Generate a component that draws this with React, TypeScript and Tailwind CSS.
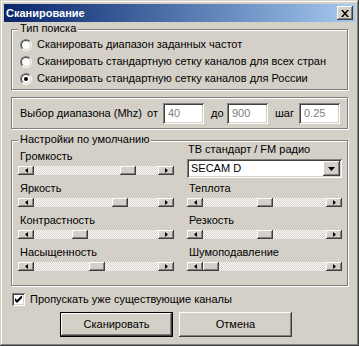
import React from "react";

const raised =
  "shadow-[inset_-1px_-1px_#404040,inset_1px_1px_#ffffff,inset_-2px_-2px_#808080,inset_2px_2px_#d4d0c8]";
const sunken =
  "shadow-[inset_1px_1px_#808080,inset_-1px_-1px_#ffffff,inset_2px_2px_#404040,inset_-2px_-2px_#d4d0c8]";

function Group({ label, className, children }: { label?: string; className: string; children: React.ReactNode }) {
  return (
    <div
      className={
        "relative border border-[#808080] shadow-[1px_1px_0_#ffffff,inset_1px_1px_0_#ffffff] " + className
      }
    >
      {label && (
        <span className="absolute -top-[8px] left-[6px] bg-[#d4d0c8] px-[2px] leading-[13px]">{label}</span>
      )}
      {children}
    </div>
  );
}

function Radio({ checked, label }: { checked?: boolean; label: string }) {
  return (
    <div className="flex h-[17px] items-center">
      <div className="h-[12px] w-[12px] rounded-full border border-t-[#808080] border-l-[#808080] border-b-white border-r-white">
        <div className="flex h-[10px] w-[10px] items-center justify-center rounded-full border border-t-[#404040] border-l-[#404040] border-b-[#d4d0c8] border-r-[#d4d0c8] bg-white">
          {checked && <div className="h-[4px] w-[4px] rounded-full bg-black" />}
        </div>
      </div>
      <span className="ml-[5px] leading-[13px]">{label}</span>
    </div>
  );
}

function Arrow({ dir }: { dir: "left" | "right" }) {
  return (
    <svg width="3" height="5" viewBox="0 0 3 5">
      {dir === "left" ? <path d="M3 0 L0 2.5 L3 5 Z" fill="#000" /> : <path d="M0 0 L3 2.5 L0 5 Z" fill="#000" />}
    </svg>
  );
}

function Scroll({ pos }: { pos: number }) {
  return (
    <div className="flex h-[9px] w-full">
      <div className={"flex w-[16px] items-center justify-center bg-[#d4d0c8] " + raised}>
        <Arrow dir="left" />
      </div>
      <div className="relative flex-1 bg-[repeating-conic-gradient(#ffffff_0_25%,#d4d0c8_0_50%)] bg-[length:2px_2px]">
        <div className={"absolute top-0 h-[9px] w-[16px] bg-[#d4d0c8] " + raised} style={{ left: pos }} />
      </div>
      <div className={"flex w-[16px] items-center justify-center bg-[#d4d0c8] " + raised}>
        <Arrow dir="right" />
      </div>
    </div>
  );
}

function Slider({ label, pos, first }: { label: string; pos: number; first?: boolean }) {
  return (
    <div className={first ? "" : "mt-[7px]"}>
      <div className="pl-[2px] leading-[13px]">{label}</div>
      <div className="mt-[3px]">
        <Scroll pos={pos} />
      </div>
    </div>
  );
}

function Field({ value }: { value: string }) {
  return (
    <div className={"flex h-[21px] w-[41px] items-center bg-white pl-[5px] text-[#808080] " + sunken}>{value}</div>
  );
}

function Button({ label, def }: { label: string; def?: boolean }) {
  return (
    <div className={"h-[25px] w-[113px] " + (def ? "border border-black" : "")}>
      <div className={"flex h-full w-full items-center justify-center bg-[#d4d0c8] " + raised}>{label}</div>
    </div>
  );
}

export default function App() {
  return (
    <div
      className={
        "flex h-[346px] w-[359px] flex-col bg-[#d4d0c8] p-[4px] text-[11px] text-black shadow-[inset_-1px_-1px_#404040,inset_1px_1px_#d4d0c8,inset_-2px_-2px_#808080,inset_2px_2px_#ffffff]"
      }
      style={{ fontFamily: '"Liberation Sans", Arial, sans-serif' }}
    >
      <div className="flex h-[18px] items-center justify-between bg-gradient-to-r from-[#0a246a] to-[#a6caf0] pl-[2px] pr-[2px]">
        <span className="font-bold text-white leading-[13px]">Сканирование</span>
        <div className={"flex h-[14px] w-[16px] items-center justify-center bg-[#d4d0c8] " + raised}>
          <svg width="8" height="7" viewBox="0 0 8 7">
            <path d="M0 0 L2 0 L4 2.5 L6 0 L8 0 L5 3.5 L8 7 L6 7 L4 4.5 L2 7 L0 7 L3 3.5 Z" fill="#000" />
          </svg>
        </div>
      </div>

      <Group label="Тип поиска" className="mx-[7px] mt-[7px] h-[61px] pl-[8px] pt-[6px]">
        <Radio label="Сканировать диапазон заданных частот" />
        <Radio label="Сканировать стандартную сетку каналов для всех стран" />
        <Radio checked label="Сканировать стандартную сетку каналов для России" />
      </Group>

      <Group className="mx-[7px] mt-[7px] flex h-[32px] items-center pl-[8px]">
        <span className="w-[127px]">Выбор диапазона (Mhz)</span>
        <span className="w-[16px]">от</span>
        <Field value="40" />
        <span className="ml-[7px] w-[16px]">до</span>
        <Field value="900" />
        <span className="ml-[7px] w-[24px]">шаг</span>
        <Field value="0.25" />
      </Group>

      <Group label="Настройки по умолчанию" className="mx-[7px] mt-[11px] flex h-[146px] pl-[6px]">
        <div className="flex w-[156px] flex-col pt-[9px]">
          <Slider first label="Громкость" pos={86} />
          <Slider label="Яркость" pos={78} />
          <Slider label="Контрастность" pos={38} />
          <Slider label="Насыщенность" pos={55} />
        </div>
        <div className="ml-[13px] flex w-[155px] flex-col pt-[2px]">
          <div className="pl-[1px] leading-[13px]">ТВ стандарт / FM радио</div>
          <div className={"mt-[3px] flex h-[19px] items-center bg-white pl-[4px] pr-[2px] " + sunken}>
            <span className="flex-1">SECAM D</span>
            <div className={"flex h-[15px] w-[17px] items-center justify-center bg-[#d4d0c8] " + raised}>
              <svg width="7" height="4" viewBox="0 0 7 4">
                <path d="M0 0 L7 0 L3.5 4 Z" fill="#000" />
              </svg>
            </div>
          </div>
          <div className="mt-[4px]">
            <Slider first label="Теплота" pos={54} />
          </div>
          <Slider label="Резкость" pos={54} />
          <Slider label="Шумоподавление" pos={0} />
        </div>
      </Group>

      <div className="ml-[8px] mt-[7px] flex items-center">
        <div className={"flex h-[13px] w-[13px] items-center justify-center bg-white " + sunken}>
          <svg width="7" height="7" viewBox="0 0 7 7">
            <path d="M0 2 L0 5 L2 7 L7 2 L7 -1 L2 4 Z" fill="#000" />
          </svg>
        </div>
        <span className="ml-[5px] leading-[13px]">Пропускать уже существующие каналы</span>
      </div>

      <div className="ml-[56px] mt-[6px] flex gap-[6px]">
        <Button def label="Сканировать" />
        <Button label="Отмена" />
      </div>
    </div>
  );
}
